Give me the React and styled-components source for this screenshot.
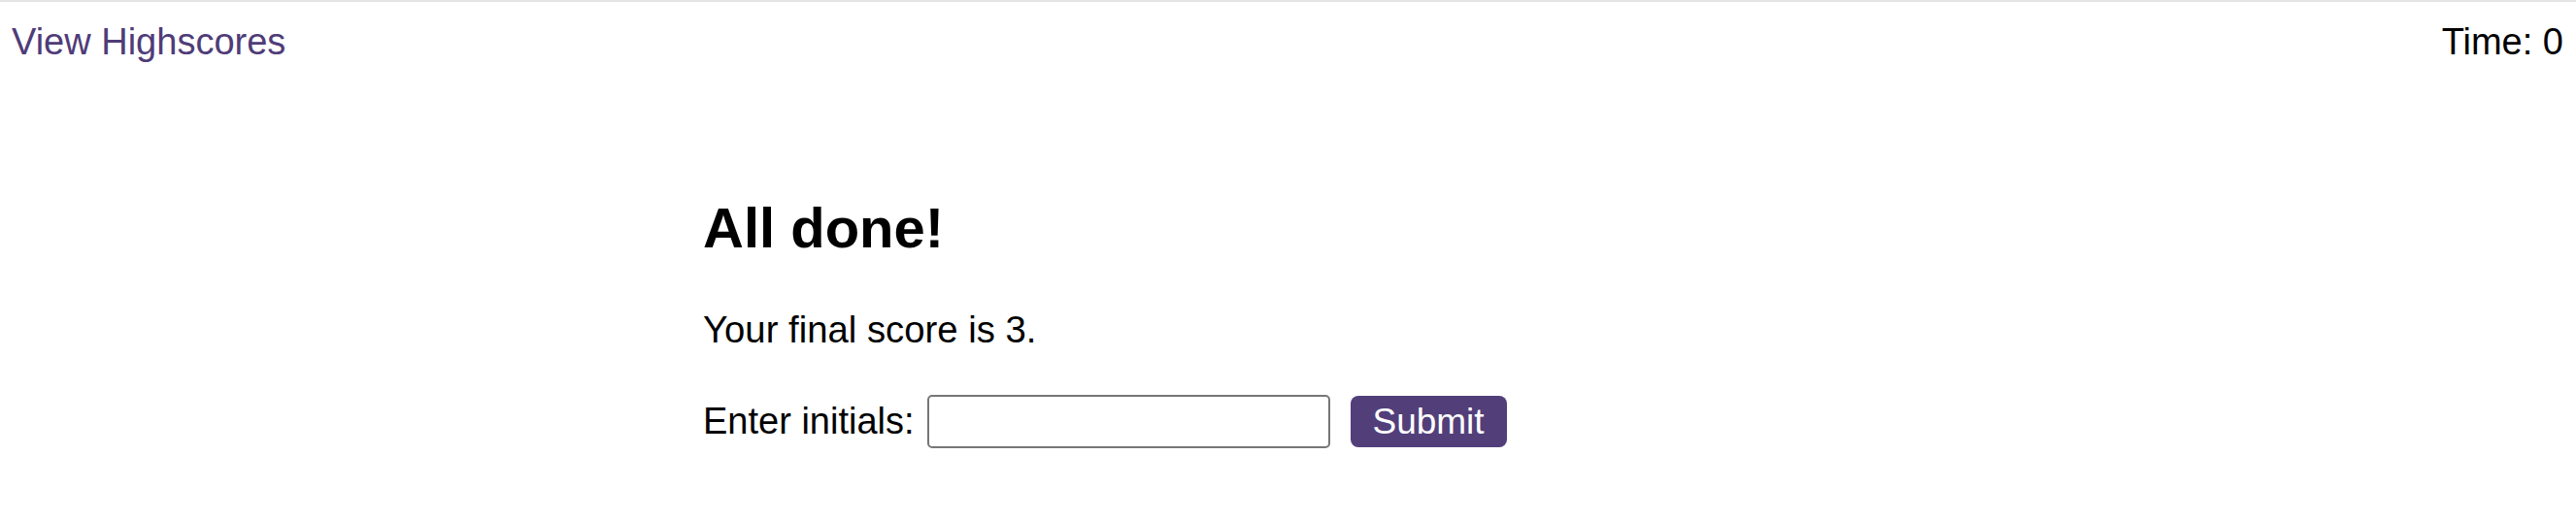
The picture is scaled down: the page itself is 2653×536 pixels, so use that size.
import React from "react";
import styled, { createGlobalStyle } from "styled-components";

const GlobalStyle = createGlobalStyle`
  html, body {
    margin: 0;
    padding: 0;
    background: #ffffff;
  }
  body {
    font-family: "Liberation Sans", Arial, sans-serif;
    color: #000000;
  }
`;

const Page = styled.div`
  border-top: 2px solid #e4e4e4;
  min-height: 534px;
`;

const Header = styled.header`
  display: flex;
  justify-content: space-between;
  align-items: flex-start;
  padding: 20px 13px 0 12px;
  font-size: 38px;
  line-height: normal;
`;

const HighscoreLink = styled.a`
  color: #4f3c78;
  text-decoration: none;
  cursor: pointer;
`;

const Timer = styled.div`
  color: #000000;
`;

const Main = styled.main`
  max-width: 1205px;
  margin: 136px auto 0;
`;

const Title = styled.h1`
  margin: 0;
  font-size: 58px;
  font-weight: 700;
  line-height: normal;
`;

const Score = styled.p`
  margin: 50px 0 0;
  font-size: 38.3px;
  line-height: normal;
`;

const Form = styled.form`
  display: flex;
  align-items: center;
  margin-top: 45px;
  font-size: 38px;
`;

const Label = styled.label`
  margin-right: 13px;
  line-height: normal;
`;

const Input = styled.input`
  box-sizing: border-box;
  width: 415px;
  height: 55px;
  margin: 0 21px 0 0;
  padding: 2px 8px;
  border: 2px solid #767676;
  border-radius: 5px;
  font-family: inherit;
  font-size: 30px;
  background: #ffffff;
  outline: none;
`;

const SubmitButton = styled.button`
  box-sizing: border-box;
  width: 161px;
  height: 53px;
  padding: 0;
  border: none;
  border-radius: 8px;
  background: #523f7a;
  color: #ffffff;
  font-family: inherit;
  font-size: 37px;
  line-height: 1;
  cursor: pointer;
`;

export default function App() {
  return (
    <>
      <GlobalStyle />
      <Page>
        <Header>
          <HighscoreLink>View Highscores</HighscoreLink>
          <Timer>Time: 0</Timer>
        </Header>
        <Main>
          <Title>All done!</Title>
          <Score>Your final score is 3.</Score>
          <Form onSubmit={(e) => e.preventDefault()}>
            <Label htmlFor="initials">Enter initials:</Label>
            <Input id="initials" type="text" />
            <SubmitButton type="submit">Submit</SubmitButton>
          </Form>
        </Main>
      </Page>
    </>
  );
}
